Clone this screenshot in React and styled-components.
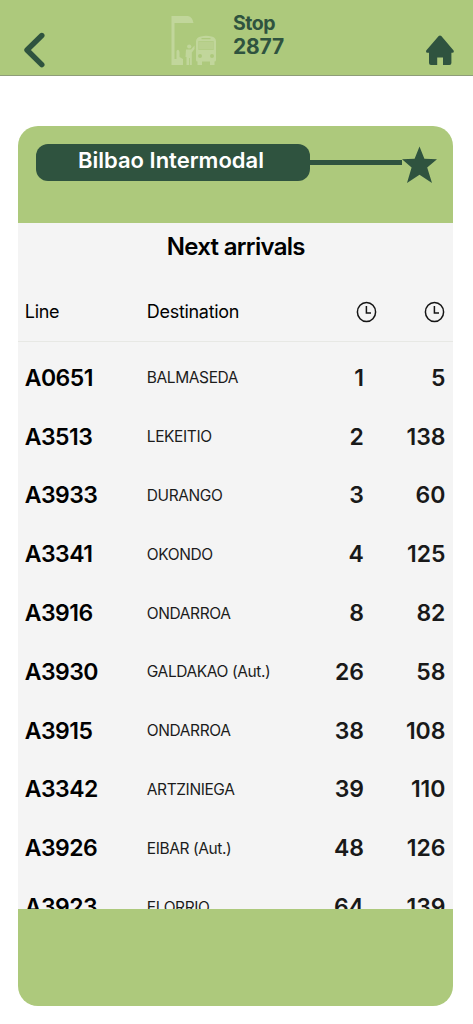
import React from 'react';
import styled, { createGlobalStyle } from 'styled-components'

const GlobalStyle = createGlobalStyle`
  * { box-sizing: border-box; }
  body {
    margin: 0;
    background: #fff;
    color: #000;
    font-family: Inter, "Liberation Sans", sans-serif;
  }
`

const green = '#adc97c'
const dark = '#2f533f'

const Page = styled.div`
  height: 1024px;
  overflow: hidden;
`
const TopBar = styled.header`
  display: flex;
  height: 76px;
  background: ${green};
  border-bottom: 1px solid #8e9d78;
`
const IconButton = styled.button`
  display: block;
  padding: ${props => props.$pad};
  border: 0;
  background: none;
  svg { display: block; }
`
const StopInfo = styled.div`
  display: flex;
  flex: 1;
  padding: 12px 0 0 126px;
`
const StopIcon = styled.svg`
  display: block;
  margin: 3px 15px 0 0;
`
const StopLabel = styled.div`
  font-size: 19.5px;
  font-weight: 700;
  line-height: 23px;
  letter-spacing: -0.5px;
  color: ${dark};
`
const StopNumber = styled.div`
  font-size: 21px;
  line-height: 23px;
  letter-spacing: -0.2px;
`

const Card = styled.main`
  display: flex;
  flex-direction: column;
  width: 435px;
  height: 880px;
  margin: 50px 0 0 18.3px;
  border-radius: 20px;
  background: ${green};
  overflow: hidden;
`
const CardHeader = styled.div`
  display: flex;
  align-items: flex-start;
  flex: none;
  height: 97px;
  padding: 18px 15px 0 17.7px;
`
const StopName = styled.div`
  flex: none;
  width: 274px;
  height: 37px;
  padding-right: 4px;
  border-radius: 12px;
  background: ${dark};
  color: #fff;
  font-size: 22px;
  font-weight: 600;
  line-height: 32px;
  letter-spacing: 0;
  text-align: center;
  white-space: nowrap;
`
const Connector = styled.div`
  flex: none;
  width: 92px;
  height: 5px;
  margin-top: 16px;
  background: ${dark};
`
const Star = styled.svg`
  display: block;
  flex: none;
  margin-top: 2px;
`

const Content = styled.section`
  flex: none;
  height: 686px;
  background: #f4f4f4;
  overflow: hidden;
`
const Title = styled.h1`
  margin: 0;
  height: 59.5px;
  font-size: 24px;
  font-weight: 600;
  line-height: 48px;
  letter-spacing: -0.7px;
  text-align: center;
`
const Row = styled.div`
  display: grid;
  grid-template-columns: 122px 125px 92px 81.5px;
  align-items: center;
  height: 58.8px;
  padding-left: 6.5px;
`
const HeadRow = styled(Row)`
  height: 59px;
  border-bottom: 1px solid #e7e8e4;
  font-size: 18px;
  letter-spacing: -0.3px;
`
const Rows = styled.div`
  padding-top: 7px;
`
const ClockCell = styled.div`
  display: flex;
  justify-content: flex-end;
  margin-right: ${props => props.$shift};
`
const Line = styled.div`
  font-size: 23px;
  font-weight: 600;
  letter-spacing: -0.55px;
`
const Destination = styled.div`
  font-size: 15.5px;
  color: #1c1c1c;
  letter-spacing: -0.4px;
  white-space: nowrap;
`
const Minutes = styled.div`
  font-size: 23px;
  font-weight: 600;
  color: #191919;
  letter-spacing: -0.1px;
  text-align: right;
`

const arrivals = [
  ['A0651', 'BALMASEDA', 1, 5],
  ['A3513', 'LEKEITIO', 2, 138],
  ['A3933', 'DURANGO', 3, 60],
  ['A3341', 'OKONDO', 4, 125],
  ['A3916', 'ONDARROA', 8, 82],
  ['A3930', 'GALDAKAO (Aut.)', 26, 58],
  ['A3915', 'ONDARROA', 38, 108],
  ['A3342', 'ARTZINIEGA', 39, 110],
  ['A3926', 'EIBAR (Aut.)', 48, 126],
  ['A3923', 'ELORRIO', 64, 139],
]

const BackIcon = () => (
  <svg width="22" height="36" viewBox="0 0 22 36" fill="none" stroke={dark} strokeWidth="5.4" strokeLinecap="round" strokeLinejoin="round">
    <path d="M18.8 3.5 4 18 18.8 32.7" />
  </svg>
)

const HomeIcon = () => (
  <svg width="30" height="32" viewBox="0 0 30 32" fill={dark}>
    <path d="M13.7 1Q15 0 16.3 1L28.6 15.6Q29.4 17.8 27.4 17.8H26.4V28Q26.4 30 24.4 30H18V22.5H12.2V30H6Q4 30 4 28V17.8H2.2Q.4 17.8 1.2 15.6Z" />
  </svg>
)

const ShelterIcon = () => (
  <StopIcon width="47" height="52" viewBox="0 0 47 52" fill="#c1d69b">
    <path d="M.5 1H17Q21.500 2 22.500 8H3.500V44H5.500V36Q7.500 33 8.500 37V42L12 44V50H.5Z" />
    <circle cx="18.2" cy="31.5" r="2.1" />
    <path d="M15 34.500H20L23.500 30.500V34L20.800 37.500V50H18.800V43H18V50H15.500V42H14.500Z" />
    <path fillRule="evenodd" d="M30 21.500Q35.200 19.800 40.500 21.500Q44.500 22 45 26V45Q45 46.500 43.500 46.500V50H39V46.500H31V50H26.500V46.500Q25 46.500 25 45V26Q25.500 22 30 21.500ZM30.500 23V24.200H39.500V23ZM27.500 26V35H42.500V26Z" />
    <path d="M28 26.500H42V34.500H28Z" fill="#b9d08e" />
    <g fill={green}>
      <circle cx="29" cy="41" r="2" />
      <circle cx="41" cy="41" r="2" />
    </g>
  </StopIcon>
)

const ClockIcon = () => (
  <svg width="21" height="22" viewBox="0 0 21 22" fill="none" stroke="#151515">
    <ellipse cx="10.5" cy="11" rx="9.1" ry="9.6" strokeWidth="1.5" />
    <path d="M10.4 5V12H15" strokeWidth="1.5" />
  </svg>
)

const App = () => {
  return (
    <Page>
      <GlobalStyle />
      <TopBar>
        <IconButton $pad="24px 0 0 23px" aria-label="Back"><BackIcon /></IconButton>
        <StopInfo>
          <ShelterIcon />
          <StopLabel>
            Stop
            <StopNumber>2877</StopNumber>
          </StopLabel>
        </StopInfo>
        <IconButton $pad="26px 18px 0 0" aria-label="Home"><HomeIcon /></IconButton>
      </TopBar>
      <Card>
        <CardHeader>
          <StopName>Bilbao Intermodal</StopName>
          <Connector />
          <Star width="36" height="38" viewBox="0 0 36 38" fill={dark}>
            <path d="M17.5.5 22.4 12.8 35 13.2 25.2 21.5 30 37 17.5 28.8 5 37 9.6 21.5 0 13.2 12.6 12.8Z" />
          </Star>
        </CardHeader>
        <Content>
          <Title>Next arrivals</Title>
          <HeadRow>
            <div>Line</div>
            <div>Destination</div>
            <ClockCell $shift="-13.2px"><ClockIcon /></ClockCell>
            <ClockCell $shift="0.3px"><ClockIcon /></ClockCell>
          </HeadRow>
          <Rows>
            {arrivals.map(([line, destination, next, following]) => (
              <Row key={line}>
                <Line>{line}</Line>
                <Destination>{destination}</Destination>
                <Minutes>{next}</Minutes>
                <Minutes>{following}</Minutes>
              </Row>
            ))}
          </Rows>
        </Content>
      </Card>
    </Page>
  )
}

export default App;
